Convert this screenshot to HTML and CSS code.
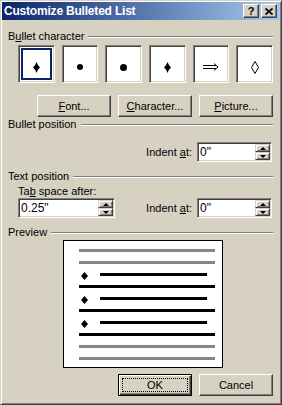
FILE: index.html
```html
<!DOCTYPE html>
<html lang="en">
<head>
  <meta charset="UTF-8">
  <title>Customize Bulleted List</title>
  <link rel="stylesheet" href="styles.css">
</head>
<body>
  <div class="window">
    <div class="titlebar">
      <span class="title">Customize Bulleted List</span>
      <div class="title-buttons">
        <span class="tbtn help">?</span>
        <span class="tbtn">
          <svg width="8" height="7" viewBox="0 0 8 7"><path d="M0.5 0.5L7.5 6.5M7.5 0.5L0.5 6.5" stroke="#000" stroke-width="1.7"/></svg>
        </span>
      </div>
    </div>

    <div class="body">
      <div class="group-head first"><span>B<u>u</u>llet character</span></div>
      <div class="bullets">
        <div class="bullet selected">
          <svg width="7" height="11" viewBox="0 0 7 11"><path d="M3.5 0Q5 4 7 5.5Q5 7 3.5 11Q2 7 0 5.5Q2 4 3.5 0Z" fill="#000"/></svg>
        </div>
        <div class="bullet">
          <svg width="6" height="6" viewBox="0 0 6 6"><circle cx="3" cy="3" r="3" fill="#000"/></svg>
        </div>
        <div class="bullet">
          <svg width="7" height="7" viewBox="0 0 7 7"><circle cx="3.5" cy="3.5" r="3.5" fill="#000"/></svg>
        </div>
        <div class="bullet">
          <svg width="7" height="11" viewBox="0 0 7 11"><path d="M3.5 0Q5 4 7 5.5Q5 7 3.5 11Q2 7 0 5.5Q2 4 3.5 0Z" fill="#000"/></svg>
        </div>
        <div class="bullet">
          <svg width="16" height="8" viewBox="0 0 16 8"><path d="M0 2.5H13M0 5.5H13M11 0.5L15 4L11 7.5" stroke="#000" stroke-width="1" fill="none"/></svg>
        </div>
        <div class="bullet">
          <svg width="8" height="13" viewBox="0 0 8 13"><path d="M4 0.5L7.5 6.5L4 12.5L0.5 6.5Z" stroke="#000" stroke-width="1" fill="none"/></svg>
        </div>
      </div>

      <div class="btn-row">
        <div class="btn"><span><u>F</u>ont...</span></div>
        <div class="btn"><span><u>C</u>haracter...</span></div>
        <div class="btn"><span><u>P</u>icture...</span></div>
      </div>

      <div class="group-head"><span>Bullet position</span></div>
      <div class="indent-row">
        <label>Indent <u>a</u>t:</label>
        <div class="spin">
          <span class="spin-value">0"</span>
          <div class="spin-btns">
            <span class="spin-btn"><i class="arrow up"></i></span>
            <span class="spin-btn"><i class="arrow down"></i></span>
          </div>
        </div>
      </div>

      <div class="group-head text-pos"><span>Text position</span></div>
      <div class="tab-row">
        <div class="tab-field">
          <label>Ta<u>b</u> space after:</label>
          <div class="spin wide">
            <span class="spin-value">0.25"</span>
            <div class="spin-btns">
              <span class="spin-btn"><i class="arrow up"></i></span>
              <span class="spin-btn"><i class="arrow down"></i></span>
            </div>
          </div>
        </div>
        <div class="indent-field">
          <label>Indent <u>a</u>t:</label>
          <div class="spin">
            <span class="spin-value">0"</span>
            <div class="spin-btns">
              <span class="spin-btn"><i class="arrow up"></i></span>
              <span class="spin-btn"><i class="arrow down"></i></span>
            </div>
          </div>
        </div>
      </div>

      <div class="group-head preview-head"><span>Preview</span></div>
      <div class="preview">
        <i class="pline grey"></i>
        <i class="pline grey"></i>
        <div class="prow">
          <svg width="7" height="8" viewBox="0 0 7 8"><path d="M3.5 0L7 4L3.5 8L0 4Z" fill="#000"/></svg>
          <i class="pline short"></i>
        </div>
        <i class="pline"></i>
        <div class="prow">
          <svg width="7" height="8" viewBox="0 0 7 8"><path d="M3.5 0L7 4L3.5 8L0 4Z" fill="#000"/></svg>
          <i class="pline short"></i>
        </div>
        <i class="pline"></i>
        <div class="prow">
          <svg width="7" height="8" viewBox="0 0 7 8"><path d="M3.5 0L7 4L3.5 8L0 4Z" fill="#000"/></svg>
          <i class="pline short"></i>
        </div>
        <i class="pline"></i>
        <i class="pline grey"></i>
        <i class="pline grey"></i>
      </div>

      <div class="btn-row bottom">
        <div class="btn default"><span class="focus">OK</span></div>
        <div class="btn"><span>Cancel</span></div>
      </div>
    </div>
  </div>
</body>
</html>
```

FILE: styles.css
```css
* {
  box-sizing: border-box;
  margin: 0;
  padding: 0;
}

body {
  background: #d6d1c0;
  color: #000;
  font-family: "Liberation Sans", Arial, sans-serif;
  font-size: 11px;
}

.window {
  width: 282px;
  height: 405px;
  padding: 1px;
  background: #d6d1c0;
  border: 1px solid;
  border-color: #d6d1c0 #404040 #404040 #d6d1c0;
  box-shadow: inset 1px 1px #fff, inset -1px -1px #808080;
}

.titlebar {
  height: 18px;
  display: flex;
  align-items: center;
  justify-content: space-between;
  padding: 0 3px 0 2px;
  background: linear-gradient(to right, #0a246a, #a6caf0);
}

.title {
  color: #fff;
  font-weight: bold;
  font-size: 12px;
  letter-spacing: -0.2px;
  line-height: 18px;
}

.title-buttons {
  display: flex;
  gap: 2px;
}

.tbtn {
  width: 16px;
  height: 14px;
  display: flex;
  align-items: center;
  justify-content: center;
  background: #d6d1c0;
  border: 1px solid;
  border-color: #fff #404040 #404040 #fff;
  box-shadow: inset -1px -1px #808080;
}

.tbtn.help {
  font-weight: bold;
  font-size: 11px;
  line-height: 12px;
}

.body {
  padding: 0 7px 0 6px;
}

.group-head {
  display: flex;
  align-items: center;
  height: 13px;
  line-height: 13px;
  margin-top: 1px;
}

.group-head::after {
  content: "";
  flex: 1;
  margin-left: 4px;
  border-top: 1px solid #808080;
  border-bottom: 1px solid #fff;
}

.group-head.first {
  margin-top: 10px;
}

.group-head.text-pos,
.group-head.preview-head {
  margin-top: 8px;
}

/* bullet picker */
.bullets {
  display: grid;
  grid-template-columns: repeat(6, 1fr);
  gap: 7px;
  margin: 2px 0 0 10px;
}

.bullet {
  height: 38px;
  display: flex;
  align-items: center;
  justify-content: center;
  padding-top: 6px;
  background: #fff;
  border: 1px solid;
  border-color: #808080 #fff #fff #808080;
  box-shadow: inset 1px 1px #404040, inset -1px -1px #d4d0c8;
}

.bullet.selected {
  outline: 2px solid #0a246a;
  outline-offset: -5px;
}

/* buttons */
.btn-row {
  display: flex;
  justify-content: flex-end;
  gap: 7px;
  margin-top: 12px;
}

.btn-row.bottom {
  margin-top: 6px;
}

.btn {
  width: 74px;
  height: 22px;
  display: flex;
  align-items: center;
  justify-content: center;
  background: #d6d1c0;
  border: 1px solid;
  border-color: #fff #404040 #404040 #fff;
  box-shadow: inset -1px -1px #808080;
}

.btn.default {
  padding: 3px;
  border-color: #000;
  box-shadow: inset 1px 1px #fff, inset -1px -1px #404040, inset -2px -2px #808080;
}

.focus {
  flex: 1;
  align-self: stretch;
  display: flex;
  align-items: center;
  justify-content: center;
  border: 1px dotted #000;
}

/* spin fields */
.indent-row {
  display: flex;
  justify-content: flex-end;
  align-items: center;
  gap: 5px;
  margin: 11px 1px 0 0;
}

.spin {
  width: 75px;
  height: 20px;
  display: flex;
  background: #fff;
  border: 1px solid;
  border-color: #808080 #fff #fff #808080;
  box-shadow: inset 1px 1px #404040, inset -1px -1px #d4d0c8;
  padding: 1px;
}

.spin.wide {
  width: 97px;
}

.spin-value {
  flex: 1;
  padding-left: 1px;
  font-size: 12px;
  line-height: 16px;
}

.spin-btns {
  width: 15px;
  display: flex;
  flex-direction: column;
}

.spin-btn {
  flex: 1;
  display: flex;
  align-items: center;
  justify-content: center;
  background: #d6d1c0;
  border: 1px solid;
  border-color: #d6d1c0 #404040 #404040 #d6d1c0;
  box-shadow: inset 1px 1px #fff, inset -1px -1px #808080;
}

.arrow {
  width: 0;
  height: 0;
  border-left: 3px solid transparent;
  border-right: 3px solid transparent;
}

.arrow.up {
  border-bottom: 3px solid #000;
}

.arrow.down {
  border-top: 3px solid #000;
}

.tab-row {
  display: flex;
  justify-content: space-between;
  align-items: flex-end;
  margin-top: 2px;
  padding: 0 1px 0 10px;
}

.tab-field label {
  display: block;
  line-height: 13px;
}

.indent-field {
  display: flex;
  align-items: center;
  gap: 5px;
}

/* preview */
.preview {
  width: 160px;
  height: 128px;
  margin: 1px 0 0 55px;
  padding: 8px 7px 0 15px;
  display: flex;
  flex-direction: column;
  gap: 9px;
  background: #fff;
  border: 1px solid #000;
}

.pline {
  display: block;
  height: 3px;
  background: #000;
}

.pline.grey {
  background: #858490;
}

.prow {
  height: 3px;
  display: flex;
  align-items: center;
  padding-left: 2px;
}

.prow svg {
  margin-top: 3px;
}

.pline.short {
  flex: 1;
  margin: 0 8px 0 12px;
}
```
